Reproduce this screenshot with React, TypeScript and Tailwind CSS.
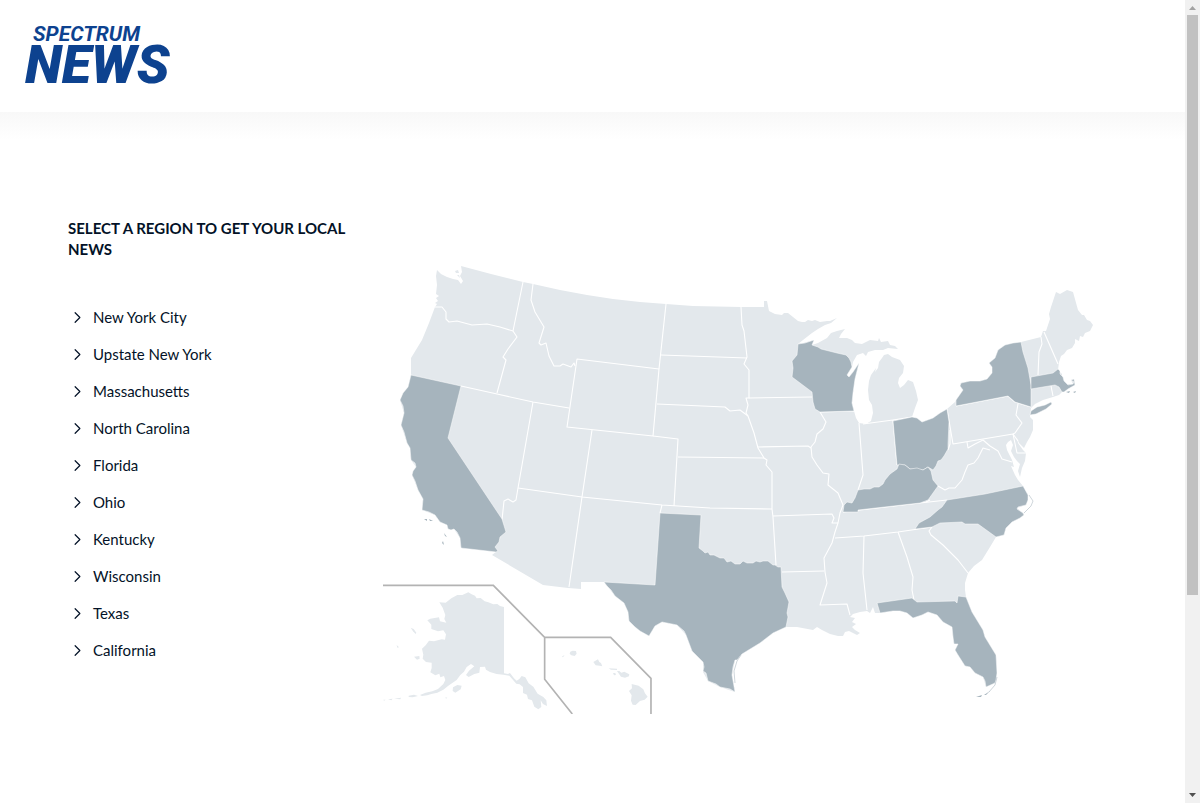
import { ChevronRight } from "lucide-react";

interface Region {
  name: string;
  href: string;
}

const REGIONS: Region[] = [
  { name: "New York City", href: "#new-york-city" },
  { name: "Upstate New York", href: "#upstate-new-york" },
  { name: "Massachusetts", href: "#massachusetts" },
  { name: "North Carolina", href: "#north-carolina" },
  { name: "Florida", href: "#florida" },
  { name: "Ohio", href: "#ohio" },
  { name: "Kentucky", href: "#kentucky" },
  { name: "Wisconsin", href: "#wisconsin" },
  { name: "Texas", href: "#texas" },
  { name: "California", href: "#california" },
];

// Outline of the lower 48, clockwise from Puget Sound
const MAINLAND =
  "M461 266 L491 274 L523 282 L533 284 L560 290 L587 295 L613 299 L640 302 L666 304 L693 306 L741 307 L764 307 L764 301 L767 301 L769 311 L775 314 L782 315 L784 313 L788 313 L793 317 L798 321 L802 322 L805 322 L808 320 L812 321 L815 320 L820 322 L827 321 L830 321 L837 318 L831 323 L825 325 L818 329 L812 333 L803 340 L798 344 L803 343 L814 340 L812 345 L818 343 L827 338 L831 333 L837 331 L845 329 L841 334 L839 338 L847 338 L852 340 L855 343 L862 344 L870 340 L878 341 L879 338 L881 342 L888 341 L890 345 L895 346 L898 349 L888 348 L883 350 L875 350 L868 352 L866 356 L863 353 L857 355 L853 362 L852 367 L847 375 L849 377 L853 372 L859 363 L857 371 L854 382 L853 393 L852 403 L854 411 L856 418 L859 423 L866 424 L871 421 L873 413 L872 405 L869 400 L868 390 L869 381 L871 375 L876 368 L875 372 L878 368 L879 362 L882 358 L884 355 L888 354 L892 357 L900 360 L904 366 L903 373 L899 378 L898 383 L900 388 L904 385 L908 380 L913 382 L916 391 L918 400 L915 408 L912 417 L922 422 L933 418 L940 413 L947 409 L955 402 L956 400 L963 390 L960 386 L961 383 L970 381 L980 381 L987 379 L992 373 L992 367 L989 363 L995 358 L998 350 L1005 345 L1021 342 L1041 337 L1043 331 L1046 331 L1050 319 L1049 314 L1051 307 L1056 292 L1060 294 L1067 290 L1073 292 L1078 310 L1082 315 L1084 315 L1087 320 L1090 321 L1093 325 L1090 331 L1085 333 L1083 337 L1080 336 L1079 341 L1075 339 L1075 343 L1072 348 L1067 350 L1064 354 L1061 356 L1059 362 L1058 370 L1062 374 L1062 378 L1067 384 L1073 384 L1071 380 L1074 382 L1074 386 L1067 387 L1064 391 L1062 392 L1059 395 L1053 397 L1043 400 L1035 404 L1031 408 L1030 417 L1033 420 L1033 430 L1030 437 L1027 442 L1024 448 L1019 443 L1017 438 L1018 443 L1023 450 L1026 453 L1025 461 L1022 468 L1020 477 L1018 471 L1020 464 L1017 461 L1014 457 L1011 451 L1013 445 L1011 440 L1008 442 L1006 445 L1007 450 L1010 456 L1012 460 L1014 467 L1011 466 L1015 475 L1018 480 L1023 486 L1028 495 L1026 505 L1017 508 L1024 514 L1020 518 L1012 522 L1006 528 L1004 535 L996 537 L990 547 L982 560 L974 566 L968 573 L965 583 L965 590 L966 597 L972 612 L983 630 L985 637 L996 655 L997 673 L995 683 L986 687 L983 677 L975 673 L970 667 L965 666 L958 655 L955 650 L958 644 L954 644 L953 637 L952 627 L943 622 L937 615 L928 612 L922 615 L913 618 L907 613 L900 611 L893 611 L880 613 L875 613 L873 607 L870 613 L867 611 L860 612 L853 614 L850 617 L855 618 L852 622 L856 624 L852 627 L855 630 L860 633 L857 635 L849 631 L845 632 L843 636 L838 636 L830 634 L822 630 L817 627 L813 630 L797 627 L786 627 L773 633 L760 643 L742 654 L735 660 L732 675 L735 692 L720 687 L708 681 L703 672 L703 662 L692 651 L686 635 L677 625 L662 622 L655 626 L649 636 L640 631 L629 621 L628 612 L624 603 L615 596 L604 582 L581 582 L581 589 L568 588 L543 585 L492 555 L497 551 L461 548 L460 538 L454 529 L448 529 L447 525 L440 522 L435 515 L422 510 L423 499 L418 490 L412 475 L416 467 L411 460 L410 448 L407 443 L401 425 L404 413 L400 400 L408 387 L411 375 L411 358 L422 340 L429 323 L435 307 L437 304 L435 303 L438 301 L436 298 L439 296 L436 294 L437 285 L436 276 L437 270 L441 274 L447 277 L453 279 L458 280 L461 284 L463 281 L460 276 L462 272 Z";

const ACTIVE_STATES = [
  // California
  "M411 375 L461 386 L448 438 L502 519 L506 532 L500 537 L499 542 L495 547 L498 551 L496 552 L461 548 L460 538 L457 532 L454 529 L451 530 L448 529 L447 525 L440 522 L435 515 L429 512 L422 510 L423 499 L418 490 L415 481 L412 475 L413 471 L416 467 L415 463 L411 460 L410 448 L407 443 L404 432 L401 425 L404 413 L403 406 L400 400 L403 393 L408 387 Z",
  // Texas
  "M660 513 L701 515 L699 548 L703 551 L705 553 L708 552 L710 555 L714 555 L720 558 L724 558 L727 562 L731 561 L735 564 L740 564 L743 561 L747 563 L753 563 L756 561 L760 562 L763 561 L768 561 L773 565 L775 565 L778 567 L781 567 L782 587 L785 593 L789 602 L787 613 L788 617 L786 627 L773 633 L760 643 L742 654 L737 660 L735 660 L733 667 L732 675 L735 692 L730 689 L720 687 L716 684 L708 681 L706 673 L703 671 L704 667 L703 662 L692 651 L686 635 L684 631 L677 625 L662 622 L655 626 L649 636 L640 631 L635 627 L629 621 L628 612 L624 603 L615 596 L611 590 L607 586 L604 582 L655 585 Z",
  // Wisconsin
  "M798 344 L805 343 L814 340 L812 345 L818 347 L821 349 L837 353 L846 355 L849 358 L851 362 L852 367 L847 375 L849 377 L853 372 L859 363 L857 371 L855 379 L853 393 L852 403 L854 411 L820 412 L815 409 L813 402 L812 392 L800 383 L792 377 L793 368 L792 361 L797 355 Z",
  // Ohio
  "M893 421 L912 417 L917 418 L922 422 L933 418 L940 413 L947 409 L949 422 L948 444 L948 449 L944 456 L941 460 L938 461 L936 466 L933 470 L928 467 L923 470 L910 469 L905 465 L897 465 Z",
  // Kentucky
  "M843 512 L844 505 L847 502 L852 503 L855 498 L858 490 L864 489 L870 489 L874 487 L879 487 L883 484 L885 480 L890 474 L897 469 L899 464 L905 465 L910 469 L917 468 L923 470 L928 467 L931 471 L933 480 L938 486 L928 500 L920 503 L858 510 L858 512 Z",
  // North Carolina
  "M947 500 L985 494 L1023 486 L1028 495 L1028 500 L1026 505 L1022 506 L1018 507 L1017 509 L1023 513 L1024 515 L1020 518 L1012 522 L1006 528 L1004 535 L996 537 L978 524 L965 524 L962 522 L940 523 L932 527 L915 529 L919 523 L930 517 L938 510 L942 507 Z",
  // Florida
  "M877 603 L912 598 L917 602 L955 601 L957 603 L958 596 L966 597 L972 612 L983 630 L985 637 L996 655 L997 673 L996 680 L995 683 L986 687 L985 681 L983 677 L975 673 L970 667 L965 666 L958 655 L955 650 L958 644 L954 644 L953 637 L952 627 L943 622 L937 615 L928 612 L922 615 L913 618 L907 613 L900 611 L893 611 L880 613 Z",
  // New York
  "M956 406 L956 400 L963 390 L960 386 L961 383 L970 381 L980 381 L987 379 L992 373 L992 367 L989 363 L995 358 L998 350 L1005 345 L1013 343 L1021 342 L1023 352 L1028 368 L1031 385 L1031 407 L1015 402 L1008 396 Z",
  // Long Island
  "M1031 411 L1037 407 L1045 405 L1051 402 L1052 404 L1046 409 L1036 414 L1030 415 Z",
  // Massachusetts
  "M1031 377 L1053 373 L1058 369 L1060 371 L1060 374 L1063 377 L1064 381 L1068 385 L1073 384 L1074 382 L1071 380 L1074 379 L1075 385 L1068 389 L1064 392 L1062 392 L1059 387 L1055 385 L1031 389 Z",
];

const BORDERS = [
  "M435 307 L442 307 L446 312 L446 319 L449 322 L457 321 L472 325 L487 324 L500 327 L513 331",
  "M523 282 L513 331 L517 337 L508 349 L503 357 L506 360 L497 393",
  "M461 386 L497 394 L533 402 L569 408",
  "M533 284 L531 300 L535 312 L544 327 L539 343 L541 345 L546 343 L549 356 L554 366 L560 366 L563 364 L571 367 L574 363 L575 366",
  "M577 359 L659 369 L653 436 L567 427 Z",
  "M666 304 L659 369",
  "M661 355 L747 358",
  "M657 404 L725 407 L730 411 L740 410 L748 416",
  "M741 307 L742 325 L744 331 L747 357 L744 364 L749 370 L749 398 L746 398 L748 405 L746 413 L748 416 L754 433 L758 448 L764 458 L767 460 L766 465 L772 472 L772 509 L773 517 L776 565",
  "M653 436 L678 439 L674 506",
  "M678 457 L764 458",
  "M592 430 L582 497 L569 587",
  "M518 488 L582 497 L662 505 L710 508 L772 509",
  "M662 505 L660 513",
  "M533 402 L518 488 L516 500 L513 502 L508 499 L504 501 L502 520",
  "M749 398 L812 397",
  "M758 447 L808 446 L811 448",
  "M820 412 L826 422 L823 429 L817 434 L815 442 L811 447 L812 457 L817 465 L823 473 L829 474 L828 485 L838 493 L843 505 L840 513 L838 523 L835 532 L832 543 L824 558 L825 572 L827 583 L820 605 L847 604 L850 615",
  "M773 516 L832 514 L834 518 L832 523 L838 523",
  "M820 412 L854 411",
  "M859 423 L863 475 L858 490",
  "M863 424 L893 420 L897 465",
  "M893 420 L912 417",
  "M782 572 L824 571",
  "M835 538 L864 536 L898 532 L932 527",
  "M843 512 L920 503 L947 500",
  "M864 536 L863 573 L867 610",
  "M898 532 L907 557 L913 577 L912 590 L914 600",
  "M932 527 L929 531 L931 535 L943 545 L958 560 L968 573",
  "M930 500 L926 502",
  "M938 486 L945 490 L949 488 L955 488 L962 480 L965 472 L968 465 L974 463 L978 458 L983 448 L990 450",
  "M956 406 L1008 396 L1015 402 L1031 407",
  "M1018 404 L1016 415 L1022 423 L1015 433 L1013 434",
  "M947 409 L953 444 L1013 434 L1018 441",
  "M1013 434 L1017 453 L1026 453",
  "M950 430 L950 444 L948 450",
  "M967 442 L968 448 L975 444 L983 440 L990 446 L998 451 L1002 459 L1012 462",
  "M1041 337 L1042 344 L1039 352 L1038 375",
  "M1044 332 L1058 364",
  "M1051 386 L1053 396",
];

const BARRIER_ISLANDS = [
  "M741 655 L737 661 L734 671 L735 683",
  "M1029 495 L1033 501 L1031 506 L1024 513",
  "M997 677 L995 685 L989 692",
];

// Both insets are drawn on a grid three times finer than the mainland
const ALASKA =
  "M265 67 L275 73 L285 77 L290 85 L302 84 L314 94 L325 97 L340 103 L352 102 L360 108 L372 111 L372 310 L384 312 L390 309 L402 325 L410 332 L418 327 L425 318 L436 322 L446 340 L460 350 L473 371 L490 381 L499 391 L501 408 L489 402 L482 391 L484 411 L475 418 L463 410 L456 391 L444 387 L441 374 L429 369 L429 351 L419 343 L409 341 L388 317 L370 314 L350 312 L330 306 L318 299 L315 290 L300 291 L298 308 L283 312 L266 321 L258 315 L267 302 L283 289 L273 282 L260 291 L252 305 L241 315 L230 330 L205 347 L190 359 L172 368 L154 372 L142 376 L126 378 L120 375 L137 368 L157 364 L174 357 L190 342 L196 330 L192 318 L181 322 L178 311 L166 316 L151 307 L155 294 L155 278 L138 276 L128 266 L130 254 L126 236 L137 226 L147 212 L162 214 L185 208 L195 209 L198 193 L190 181 L174 184 L154 177 L154 164 L142 151 L151 146 L177 142 L180 154 L199 158 L193 147 L196 135 L188 113 L178 97 L197 98 L214 85 L232 75 L247 75 Z";

const ALASKA_ISLANDS = [
  "M92 173 L101 177 L109 188 L107 192 L99 184 Z",
  "M102 260 L118 258 L119 266 L111 269 Z",
  "M50 225 L57 232 L52 233 Z",
  "M219 352 L232 345 L245 347 L242 358 L226 368 L218 363 Z",
  "M86 377 L102 374 L114 378 L98 382 L86 381 Z",
  "M42 386 L63 383 L61 388 Z",
  "M24 388 L38 386 L34 391 Z",
  "M10 389 L17 389 L12 392 Z",
  "M196 382 L202 383 L198 386 Z",
];

const HAWAII = [
  "M571 245 L578 242 L588 243 L590 251 L584 258 L574 256 L569 251 Z",
  "M546 260 L553 255 L552 259 L547 262 Z",
  "M640 276 L654 268 L658 276 L663 279 L667 289 L659 287 L647 286 Z",
  "M686 295 L711 296 L711 300 L693 299 Z",
  "M699 309 L706 309 L708 315 L702 316 Z",
  "M711 303 L718 303 L724 308 L733 305 L748 313 L747 319 L735 323 L723 320 Z",
  "M755 342 L776 347 L790 358 L795 370 L803 380 L794 389 L780 393 L767 405 L758 404 L753 392 L755 376 L747 363 L756 355 Z",
];

function Logo() {
  return (
    <a href="#home" className="flex w-fit flex-col font-['Roboto',sans-serif] italic text-[#0d428f]">
      <span className="pl-2 text-[21px] font-bold leading-[19px]">SPECTRUM</span>
      <span className="text-[54px] font-black leading-[42px]">NEWS</span>
    </a>
  );
}

function RegionMap() {
  return (
    <svg viewBox="383 262 716 452" className="w-full" role="img" aria-label="United States">
      <path d={MAINLAND} fill="#e3e8ec" />
      <g fill="none" stroke="#ffffff" strokeWidth="1.1" strokeLinejoin="round">
        {BORDERS.map((d) => (
          <path key={d} d={d} />
        ))}
      </g>
      <g fill="#a6b4bd" stroke="#ffffff" strokeWidth="0.5" strokeLinejoin="round">
        {ACTIVE_STATES.map((d) => (
          <path key={d} d={d} />
        ))}
      </g>
      <g fill="none" stroke="#c3ccd2" strokeWidth="0.8">
        {BARRIER_ISLANDS.map((d) => (
          <path key={d} d={d} />
        ))}
      </g>
      <g fill="#a6b4bd">
        <path d="M424 519 L427 519 L427 521 Z M429 519 L433 521 L430 521 Z M444 533 L447 537 L445 536 Z M443 541 L444 545 L442 543 Z" />
        <path d="M976 697 L982 695 L981 697 Z M984 695 L990 691 L986 695 Z" />
        <path d="M1066 392 L1070 391 L1069 393 Z M1073 392 L1076 391 L1075 393 Z" />
      </g>
      <path d="M455 271 L458 270 L459 273 L456 273 Z M457 275 L459 275 L460 278 Z" fill="#e3e8ec" />
      <g transform="translate(380 570) scale(0.3333)">
        <g fill="#e3e8ec">
          <path d={ALASKA} />
          {[...ALASKA_ISLANDS, ...HAWAII].map((d) => (
            <path key={d} d={d} />
          ))}
        </g>
        <path
          d="M9 46 H340 L494 202 V328 L577 432 M494 202 H692 L813 325 V432"
          fill="none"
          stroke="#b3b3b3"
          strokeWidth="5"
        />
      </g>
    </svg>
  );
}

function Scrollbar() {
  return (
    <div className="flex w-[15px] shrink-0 flex-col bg-[#f1f1f1]" aria-hidden>
      <svg viewBox="0 0 15 15" className="h-[15px] w-full">
        <path d="M4 10 L7.5 6 L11 10 Z" fill="#a3a3a3" />
      </svg>
      <div className="flex-1 px-0.5">
        <div className="h-3/4 bg-[#c1c1c1]" />
      </div>
      <svg viewBox="0 0 15 15" className="h-[15px] w-full">
        <path d="M4 5 L7.5 9 L11 5 Z" fill="#505050" />
      </svg>
    </div>
  );
}

export default function App() {
  return (
    <div className="flex h-screen overflow-hidden bg-white font-['Lato',sans-serif] text-[#031227]">
      <div className="min-w-0 flex-1">
        <header className="h-28 px-[25px] pt-[25px]">
          <Logo />
        </header>
        <div className="h-7 bg-linear-to-b from-[#f8f8f8] to-white" />

        <main className="flex items-start gap-[25px] pl-[68px] pr-[86px] pt-[78px]">
          <section className="w-[290px] shrink-0">
            <h1 className="text-[15px] font-bold uppercase leading-[21px]">
              Select a region to get your local news
            </h1>
            <ul className="mt-[39px]">
              {REGIONS.map((region) => (
                <li key={region.name}>
                  <a href={region.href} className="flex h-[37px] items-center gap-1.5 text-[15px]">
                    <ChevronRight size={19} strokeWidth={1.5} />
                    {region.name}
                  </a>
                </li>
              ))}
            </ul>
          </section>
          <div className="min-w-0 flex-1 pt-11">
            <RegionMap />
          </div>
        </main>
      </div>
      <Scrollbar />
    </div>
  );
}
